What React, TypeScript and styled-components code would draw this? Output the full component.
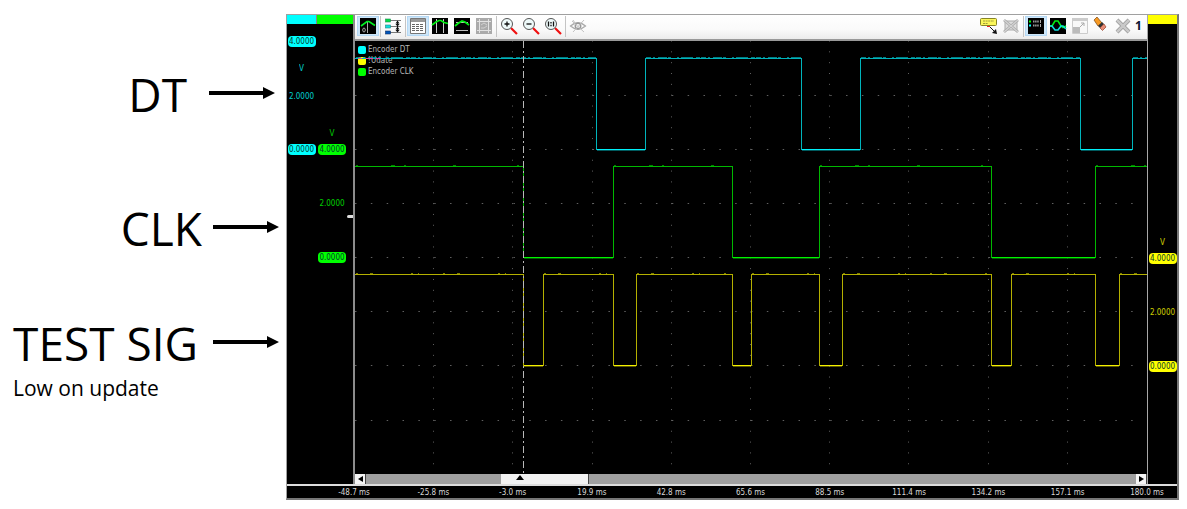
import React from "react";
import styled, { createGlobalStyle } from "styled-components";

const CYAN = "#00ffff";
const GREEN = "#00ff00";
const YELLOW = "#ffff00";

const GlobalStyle = createGlobalStyle`
  *, *::before, *::after { box-sizing: border-box; }
  body { margin: 0; background: #fff; }
`;

const Page = styled.main`
  display: grid;
  grid-template-columns: 286px minmax(0, 1fr);
  padding-right: 8px;
  font-family: "Open Sans", Lato, sans-serif;
  color: #000;
`;

const Annotations = styled.section`
  display: flex;
  flex-direction: column;
  padding-top: 66px;
`;

const Annotation = styled.div<{ $before?: number; $gap: number; $inset: number }>`
  display: flex;
  align-items: center;
  justify-content: flex-end;
  gap: ${(p) => p.$gap}px;
  margin-top: ${(p) => p.$before ?? 0}px;
  padding-right: ${(p) => p.$inset}px;
`;

const SignalName = styled.h2`
  margin: 0;
  font-size: 46px;
  font-weight: 400;
  line-height: 56px;
  white-space: nowrap;
`;

const ArrowShape = styled.svg`
  flex: none;
  margin-bottom: 2px;
`;

const Note = styled.p`
  margin: 4px 0 0 13px;
  font-size: 21px;
  line-height: 26px;
`;

const Scope = styled.section`
  margin-top: 14px;
  border: 1px solid #a0a0a0;
  border-right: 2px solid #777;
  border-bottom: 2px solid #777;
  background: #000;
  font-family: "DejaVu Sans Condensed", Roboto, "Liberation Sans", sans-serif;
  font-size: 8px;
  line-height: 10px;
`;

const ScopeBody = styled.div`
  display: flex;
  border-bottom: 2px solid #ddd;
`;

const Pane = styled.div`
  display: flex;
  flex: none;
  gap: 1px;
  background: linear-gradient(#888, #888) 28px 0 / 2px 9px no-repeat;
`;

const Scale = styled.div<{ $color: string; $width: number }>`
  display: flex;
  flex-direction: column;
  align-items: center;
  width: ${(p) => p.$width}px;
  color: ${(p) => p.$color};
  border-top: 9px solid ${(p) => p.$color};
`;

const ScaleValue = styled.span<{ $before: number }>`
  margin-top: ${(p) => p.$before}px;
  opacity: 0.8;
`;

const ScaleTag = styled.span<{ $before: number; $color: string }>`
  width: 28px;
  margin-top: ${(p) => p.$before}px;
  padding-top: 1px;
  border-radius: 4px;
  background: ${(p) => p.$color};
  color: #063a2c;
  text-align: center;
`;

const GreenGroup = styled.div`
  display: flex;
`;

const MarkerTrack = styled.div`
  width: 6px;
  border-top: 9px solid ${GREEN};
`;

const TriggerMarker = styled.div`
  height: 3px;
  margin-top: 191px;
  border-radius: 2px 0 0 2px;
  background: #ddd;
`;

const Center = styled.div`
  flex: 1;
  min-width: 0;
  border-left: 2px solid #8c8c8c;
  border-right: 1px solid #a8a8a8;
`;

const Toolbar = styled.div`
  display: flex;
  align-items: center;
  height: 26px;
  padding: 0 6px 2px 2px;
  border-bottom: 2px solid #999;
  background: linear-gradient(#fff, #fafafa 60%, #ececec);
`;

const ToolButton = styled.button<{ $on?: boolean }>`
  display: flex;
  align-items: center;
  justify-content: center;
  flex: none;
  width: 22px;
  height: 20px;
  padding: 0;
  border: 1px solid ${(p) => (p.$on ? "#b5d9f5" : "transparent")};
  background: ${(p) => (p.$on ? "#cde6f9" : "transparent")};
`;

const Divider = styled.span`
  flex: none;
  width: 1px;
  height: 21px;
  margin: 0 1px;
  background: #c4c4c4;
`;

const Spacer = styled.span`
  flex: 1;
`;

const PageNumber = styled.span`
  width: 6px;
  color: #0a1430;
  font-family: "Open Sans", sans-serif;
  font-size: 12px;
  font-weight: 700;
  line-height: 16px;
`;

const PlotArea = styled.div`
  position: relative;
`;

const Legend = styled.ul`
  position: absolute;
  top: 3px;
  left: 3px;
  margin: 0;
  padding: 0;
  list-style: none;
  color: #b8b8b8;
`;

const LegendItem = styled.li<{ $color: string }>`
  display: flex;
  align-items: center;
  gap: 2px;
  height: 11px;

  &::before {
    content: "";
    width: 8px;
    height: 8px;
    border-radius: 2px;
    background: ${(p) => p.$color};
  }
`;

const Plot = styled.svg`
  display: block;
  position: relative;
  width: 100%;
  height: 433px;
`;

const ScrollBar = styled.div`
  display: flex;
  height: 10px;
  background: #a0a0a0;
`;

const ScrollButton = styled.button`
  display: flex;
  align-items: center;
  justify-content: center;
  width: 11px;
  padding: 0;
  border: 0;
  border-right: 1px solid #444;
  background: #f4f4f4;
`;

const ScrollGap = styled.div<{ $share: number }>`
  flex: ${(p) => p.$share};
`;

const ScrollThumb = styled.div`
  flex: 87;
  border-right: 1px solid #444;
  background: #f2f2f2;
`;

const ThumbArrow = styled.svg`
  display: block;
  margin-left: 15px;
`;

const TimeAxis = styled.div`
  display: flex;
  justify-content: space-between;
  height: 12px;
  padding: 2px 30px 0 67px;
  color: #d8d8d8;
`;

const TimeLabel = styled.span`
  display: flex;
  justify-content: center;
  width: 0;
  white-space: nowrap;
`;

function Arrow() {
  return (
    <ArrowShape width="66" height="12" viewBox="0 0 66 12" aria-hidden="true">
      <path d="M0 4H54V0L66 6L54 12V8H0Z" fill="#000" />
    </ArrowShape>
  );
}

type IconProps = { children: React.ReactNode };
function Icon({ children }: IconProps) {
  return (
    <svg width="18" height="18" viewBox="0 0 18 18" fill="none" aria-hidden="true">
      {children}
    </svg>
  );
}

const AutoscaleIcon = () => (
  <Icon>
    <path fill="#000" d="M1 1h16v16H1z" />
    <path d="M8.500 16V5" stroke="#aaa" />
    <path d="M2 9L8 4.500L10 4.500L16 8.500" stroke="#0e2" strokeWidth="1.700" />
    <ellipse cx="5" cy="13" rx="1.300" ry="2" stroke="#ccc" strokeWidth=".8" />
  </Icon>
);

const StackIcon = () => (
  <Icon>
    <path d="M6 3.500H17M6 9.500H17M6 15.500H17" stroke="#777" />
    <path d="M13.500 4V15" stroke="#111" />
    <path d="M11.500 6.500l2-3 2 3zM11.500 7l2 2.500 2-2.500zM11.500 12.500l2-3 2 3zM11.500 13l2 2.500 2-2.500z" fill="#111" />
    <rect x="1.500" y="2" width="5" height="3" fill="#0d4" stroke="#285" strokeWidth=".6" />
    <rect x="1.500" y="8" width="5" height="3" fill="#1dd" stroke="#288" strokeWidth=".6" />
    <rect x="1.500" y="14" width="5" height="3" fill="#05b" stroke="#136" strokeWidth=".6" />
  </Icon>
);

const TableIcon = () => (
  <Icon>
    <path d="M1.500 1.500h15v15h-15z" fill="#fff" stroke="#777" />
    <path d="M2 2h14v3H2z" fill="#999" />
    <path d="M3 7.500H15M3 9.500H15M3 11.500H15M3 13.500H15" stroke="#666" strokeDasharray="3 1" />
  </Icon>
);

const VerticalCursorIcon = () => (
  <Icon>
    <path fill="#000" d="M1 1h16v16H1z" />
    <path d="M5.500 2v14M12.500 2v14" stroke="#ccc" />
    <path d="M1 8L5 5L8 3.500L10 3.500L13 5.500L17 6.500" stroke="#0e1" strokeWidth="1.700" />
  </Icon>
);

const HorizontalCursorIcon = () => (
  <Icon>
    <path fill="#000" d="M1 1h16v16H1z" />
    <path d="M3 5.500h12M3 13.500h12" stroke="#bbb" />
    <path d="M2 9L5 6.500L9 4L12 5L16 8" stroke="#0e1" strokeWidth="1.700" />
  </Icon>
);

const CropIcon = () => (
  <Icon>
    <path fill="#aaa" d="M1 1h16v16H1z" />
    <path d="M4.500 2v14M13.500 2v14M2 4.500h14M2 13.500h14" stroke="#e2e2e2" />
    <path d="M6 8l3-2 3 2M6 11h3l3-2" stroke="#d0d0d0" />
  </Icon>
);

type LensProps = { mark: string };
const LensIcon = ({ mark }: LensProps) => (
  <Icon>
    <path d="M11 11L17 17" stroke="#f01010" strokeWidth="2.200" />
    <circle cx="7" cy="7" r="5.500" fill="#eefafa" stroke="#555" />
    <path d={mark} stroke="#111" strokeWidth="1.300" />
  </Icon>
);

const EyeIcon = () => (
  <Icon>
    <path d="M1.500 9Q9 2.500 16.500 9Q9 15.500 1.500 9Z" stroke="#aaa" strokeWidth="1.300" />
    <circle cx="9" cy="9" r="2.700" stroke="#999" strokeWidth="1.500" />
    <path d="M3 4l12 11M15 3L4 15M4 3l2 3" stroke="#c2c2c2" />
  </Icon>
);

const CommentIcon = () => (
  <Icon>
    <rect x=".5" y="1.500" width="16" height="7" rx="1" fill="#fbf75a" stroke="#888426" />
    <path d="M3 4h11M3 6.500h5" stroke="#a09c3c" strokeDasharray="2 .6" />
    <path d="M7 9.500h3" stroke="#e22" />
    <path d="M10 10l5 5" stroke="#111" />
    <path d="M17 17l-5-1 4-4z" fill="#111" />
  </Icon>
);

const ClearCommentIcon = () => (
  <Icon>
    <path d="M3 4h12v9H3z" fill="#ddd" stroke="#aaa" />
    <path d="M2 3l14 12M16 3L2 15" stroke="#aaa" strokeWidth="2.800" />
    <path d="M2 3l14 12M16 3L2 15" stroke="#d4d4d4" strokeWidth="1.200" />
  </Icon>
);

const ChannelsIcon = () => (
  <Icon>
    <path fill="#000" d="M1 1h16v16H1z" />
    <path d="M2 4.500h2" stroke="#0f0" strokeWidth="2" />
    <path d="M2 8.500h2" stroke="#0ff" strokeWidth="2" />
    <path d="M6 4.500h6M6 8.500h6" stroke="#999" strokeWidth="2" strokeDasharray="1.500 .6" />
    <path d="M13.500 3v3M13.500 7v3" stroke="#aaa" />
  </Icon>
);

const OverlayIcon = () => (
  <Icon>
    <path fill="#000" d="M1 1h16v16H1z" />
    <path d="M1 9h2L6 4h3l3 5 2 1.500L17 9" stroke="#0e1" strokeWidth="1.600" />
    <path d="M1 9h2l3 4h3l3-4h2l3 3" stroke="#1dd" strokeWidth="1.600" />
  </Icon>
);

const ExpandIcon = () => (
  <Icon>
    <path d="M1.500 1.500h15v15h-15z" fill="#f8f8f8" stroke="#ccc" />
    <path d="M1 1h16v3H1z" fill="#ccc" />
    <path d="M2 10h7v6H2z" fill="#bbb" />
    <path d="M9 10l4-4M10 6h3v3" stroke="#aaa" />
  </Icon>
);

const EraserIcon = () => (
  <Icon>
    <path d="M1 3L4 0L9 6L5 9Z" fill="#f79a24" stroke="#7a4510" strokeWidth=".7" />
    <path d="M5 9L9 5L11 7L7 11Z" fill="#333" />
    <path d="M7 11L11 7L13 10L9.500 13.500Z" fill="#e98b74" stroke="#8f3f2b" strokeWidth=".7" />
  </Icon>
);

const CloseIcon = () => (
  <Icon>
    <path d="M2 3l12 12M14 3L2 15" stroke="#999" strokeWidth="4" />
    <path d="M2 3l12 12M14 3L2 15" stroke="#c9c9c9" strokeWidth="2.500" />
  </Icon>
);

type ToolProps = { label: string; on?: boolean; children: React.ReactNode };
function Tool({ label, on, children }: ToolProps) {
  return (
    <ToolButton type="button" aria-label={label} $on={on}>
      {children}
    </ToolButton>
  );
}

const PLOT_W = 792;
const PLOT_H = 433;

// Each trace starts high at the left edge and toggles level at every listed x.
const traces = [
  { name: "dt", high: 17.5, low: 108.5, edges: [241, 290, 446, 505, 725, 777], color: "#00b4bc", bright: "#00f0f8", noise: "5 2 2 3 9 1 3 6 2 2 12 3 4 1" },
  { name: "clk", high: 125.5, low: 216.5, edges: [168, 258, 377, 464, 636, 740], color: "#00b800", bright: "#00f400", noise: "2 33 4 9 2 47 3 61" },
  { name: "update", high: 233.5, low: 324.5, edges: [168, 188, 258, 281, 377, 396, 464, 487, 636, 656, 740, 764], color: "#b4b000", bright: "#f4f000", noise: "2 12 3 38 2 5 1 24" },
];

function tracePath(high: number, low: number, edges: number[]) {
  let level = high;
  let d = `M0 ${high}`;
  edges.forEach((x) => {
    const next = level === high ? low : high;
    d += `H${x + 0.5}V${next}`;
    level = next;
  });
  return `${d}H${PLOT_W}`;
}

function segments(y: number, edges: number[], low: boolean) {
  const stops = [0, ...edges, PLOT_W];
  let d = "";
  for (let i = low ? 1 : 0; i + 1 < stops.length; i += 2) {
    d += `M${stops[i] + 1} ${y}H${stops[i + 1]}`;
  }
  return d;
}

const columns = Array.from({ length: 9 }, (_, i) => Math.round((i + 1) * 79.2) - 0.5);
const rows = Array.from({ length: 7 }, (_, i) => Math.floor((i + 1) * 54.15) + 0.5);

function Waveforms() {
  return (
    <Plot viewBox={`0 0 ${PLOT_W} ${PLOT_H}`} preserveAspectRatio="none" role="img" aria-label="Encoder waveforms" fill="none">
      {columns.map((x) => (
        <path key={x} d={`M${x} -.5V${PLOT_H}`} stroke="#606060" strokeDasharray="1 9.840" />
      ))}
      {rows.map((y) => (
        <path key={y} d={`M0 ${y}H${PLOT_W}`} stroke="#606060" strokeDasharray="1.500 14.340" />
      ))}
      {traces.map((t) => (
        <g key={t.name} shapeRendering="crispEdges">
          <path d={tracePath(t.high, t.low, t.edges)} stroke={t.color} />
          <path d={segments(t.low, t.edges, true)} stroke={t.bright} />
          <path d={segments(t.high - 1, t.edges, false)} stroke={t.color} strokeDasharray={t.noise} opacity=".7" />
          <path d={segments(t.low + 1, t.edges, true)} stroke={t.color} opacity=".5" />
        </g>
      ))}
      <path d="M3 17.500H26" stroke="#e040a0" strokeDasharray="4 4 7 3" />
      <path d={`M168.500 0V${PLOT_H}`} stroke="#b8b8b8" strokeDasharray="7 3 2 3" />
    </Plot>
  );
}

const times = ["-48.7", "-25.8", "-3.0", "19.9", "42.8", "65.6", "88.5", "111.4", "134.2", "157.1", "180.0"];

export default function App() {
  return (
    <>
      <GlobalStyle />
      <Page>
        <Annotations>
          <Annotation $gap={22} $inset={11}>
            <SignalName>DT</SignalName>
            <Arrow />
          </Annotation>
          <Annotation $before={78} $gap={11} $inset={7}>
            <SignalName>CLK</SignalName>
            <Arrow />
          </Annotation>
          <Annotation $before={59} $gap={15} $inset={7}>
            <SignalName>TEST SIG</SignalName>
            <Arrow />
          </Annotation>
          <Note>Low on update</Note>
        </Annotations>

        <Scope>
          <ScopeBody>
            <Pane>
              <Scale $color={CYAN} $width={29}>
                <ScaleTag $before={12} $color={CYAN}>4.0000</ScaleTag>
                <ScaleValue $before={17}>V</ScaleValue>
                <ScaleValue $before={18}>2.0000</ScaleValue>
                <ScaleTag $before={42} $color={CYAN}>0.0000</ScaleTag>
              </Scale>
              <GreenGroup>
                <Scale $color={GREEN} $width={30}>
                  <ScaleValue $before={105}>V</ScaleValue>
                  <ScaleTag $before={5} $color={GREEN}>4.0000</ScaleTag>
                  <ScaleValue $before={44}>2.0000</ScaleValue>
                  <ScaleTag $before={43} $color={GREEN}>0.0000</ScaleTag>
                </Scale>
                <MarkerTrack>
                  <TriggerMarker />
                </MarkerTrack>
              </GreenGroup>
            </Pane>

            <Center>
              <Toolbar>
                <Tool label="Autoscale" on><AutoscaleIcon /></Tool>
                <Divider />
                <Tool label="Stack channels"><StackIcon /></Tool>
                <Divider />
                <Tool label="Measurements" on><TableIcon /></Tool>
                <Tool label="Vertical cursors"><VerticalCursorIcon /></Tool>
                <Tool label="Horizontal cursors"><HorizontalCursorIcon /></Tool>
                <Tool label="Zoom to selection"><CropIcon /></Tool>
                <Divider />
                <Tool label="Zoom in"><LensIcon mark="M4.500 7h5M7 4.500v5" /></Tool>
                <Tool label="Zoom out"><LensIcon mark="M4.500 7h5" /></Tool>
                <Tool label="Actual size"><LensIcon mark="M4.500 4.500v5M9.500 4.500v5M7 5v1.500M7 7.800v1.500" /></Tool>
                <Divider />
                <Tool label="Hide"><EyeIcon /></Tool>
                <Spacer />
                <Tool label="Add comment"><CommentIcon /></Tool>
                <Tool label="Clear comments"><ClearCommentIcon /></Tool>
                <Divider />
                <Tool label="Channel list" on><ChannelsIcon /></Tool>
                <Tool label="Overlay"><OverlayIcon /></Tool>
                <Tool label="Expand"><ExpandIcon /></Tool>
                <Tool label="Erase"><EraserIcon /></Tool>
                <Tool label="Close"><CloseIcon /></Tool>
                <PageNumber>1</PageNumber>
              </Toolbar>

              <PlotArea>
                <Legend>
                  <LegendItem $color={CYAN}>Encoder DT</LegendItem>
                  <LegendItem $color={YELLOW}>!Udate</LegendItem>
                  <LegendItem $color={GREEN}>Encoder CLK</LegendItem>
                </Legend>
                <Waveforms />
              </PlotArea>

              <ScrollBar>
                <ScrollButton type="button" aria-label="Scroll left">
                  <svg width="5" height="6" viewBox="0 0 5 6"><path d="M5 0v6L0 3z" fill="#000" /></svg>
                </ScrollButton>
                <ScrollGap $share={135} />
                <ScrollThumb>
                  <ThumbArrow width="8" height="7" viewBox="0 0 8 7"><path d="M4 1l4 5H0z" fill="#000" /></ThumbArrow>
                </ScrollThumb>
                <ScrollGap $share={547} />
                <ScrollButton type="button" aria-label="Scroll right">
                  <svg width="5" height="6" viewBox="0 0 5 6"><path d="M0 0v6l5-3z" fill="#000" /></svg>
                </ScrollButton>
              </ScrollBar>
            </Center>

            <Scale $color={YELLOW} $width={29}>
              <ScaleValue $before={214}>V</ScaleValue>
              <ScaleTag $before={5} $color={YELLOW}>4.0000</ScaleTag>
              <ScaleValue $before={44}>2.0000</ScaleValue>
              <ScaleTag $before={43} $color={YELLOW}>0.0000</ScaleTag>
            </Scale>
          </ScopeBody>
          <TimeAxis>
            {times.map((t) => (
              <TimeLabel key={t}>{t} ms</TimeLabel>
            ))}
          </TimeAxis>
        </Scope>
      </Page>
    </>
  );
}
